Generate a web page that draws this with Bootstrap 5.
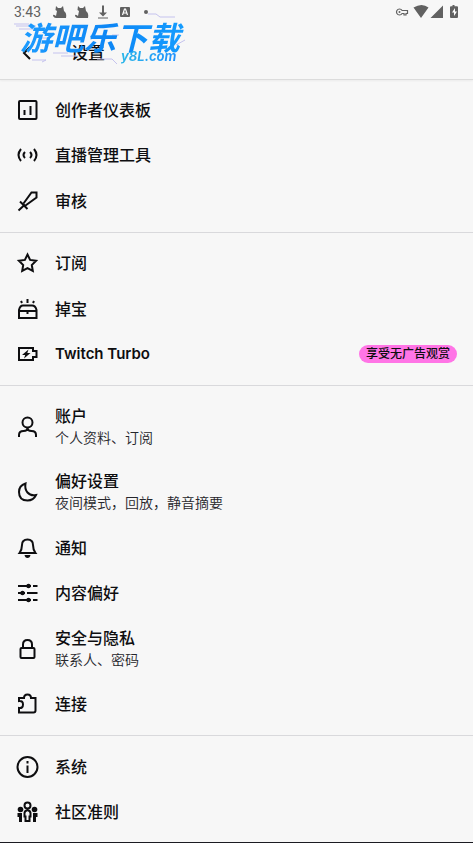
<!DOCTYPE html>
<html lang="zh-CN">
<head>
<meta charset="utf-8">
<meta name="viewport" content="width=device-width, initial-scale=1">
<title>设置</title>
<link href="https://cdn.jsdelivr.net/npm/bootstrap@5.3.0/dist/css/bootstrap.min.css" rel="stylesheet">
<style>
body { background: #f7f7f7; color: #0e0e10; font-family: Inter, "Noto Sans CJK SC", sans-serif; }
.status { height: 24px; padding: 0 14px; color: #616161; }
.clock { font: 400 14px/24px Roboto, sans-serif; width: 39px; }
.top { border-bottom: 1px solid #dcdcdc; box-shadow: 0 1px 2px #0000000d; }
.title-bar { height: 55px; padding: 2px 0 0 16px; gap: 33px; }
.title-bar h1 { font-size: 17px; line-height: 24px; font-weight: 500; }
.back { width: 22px; height: 24px; color: #0e0e10; }
.watermark { left: 14px; top: 12px; width: 172px; height: 60px; pointer-events: none; }
.wm-name, .wm-site { color: transparent; background-clip: text; -webkit-background-clip: text; white-space: nowrap; }
.wm-name { left: 4px; top: 3px; padding: 0 6px 0 2px; font: italic 700 32px/42px "Noto Sans CJK SC", sans-serif; background-image: linear-gradient(90deg, #1d9cff, #0d86f5 55%, #159dff); }
.wm-site { left: 107px; top: 34px; padding-right: 3px; font: italic 700 13px/20px Inter, sans-serif; background-image: linear-gradient(90deg, #2cb6e8, #1e90ff); }
.settings { padding: 7px 0; border-bottom: 1px solid #1b1b22; }
.item { flex: 1 0 45px; padding: 0 16px; gap: 16px; color: #0e0e10; text-decoration: none; font-size: 16px; line-height: 22px; font-weight: 500; }
.item-tall { flex-basis: 65px; }
.item small { display: block; font-size: 14px; line-height: 22px; font-weight: 350; color: #26262b; }
.item svg { width: 23px; height: 24px; flex: none; }
.latin { font-size: 15px; font-weight: 600; }
.rule { margin: 8px 0; border: 0; height: 1px; background: #d9d9dc; opacity: 1; flex: none; }
.promo { background: #ff75e6; color: #0e0e10; font-size: 12px; line-height: 18px; font-weight: 500; padding: 0 7px; }
.ln { fill: none; stroke: currentColor; stroke-width: 2; }
</style>
</head>
<body class="min-vh-100 d-flex flex-column">
<header class="top position-relative flex-shrink-0">
  <div class="status d-flex align-items-center">
    <span class="clock">3:43</span>
    <svg width="98" height="24" viewBox="0 0 98 24" fill="currentColor" aria-hidden="true">
      <path d="M3 6l2 2h3l2-2 1 5q3 2 2 7H3q-2 0-3-2 0-2 1.500-1L3 16l1-5-1.500-1z"/>
      <path d="M25 6l2 2h3l2-2 1 5q3 2 2 7H25q-2 0-3-2 0-2 1.500-1L25 16l1-5-1.500-1z"/>
      <path d="M49 5.500h2v7h3l-4 4-4-4h3zM45 17.500h10v1H45z"/>
      <rect x="67" y="7" width="10" height="10" rx="1"/>
      <path d="M69.500 15l2-6h1l2 6M70.500 13h3" fill="none" stroke="#fff" stroke-width="1.200"/>
      <circle cx="93" cy="12" r="2"/>
    </svg>
    <svg class="ms-auto" width="64" height="24" viewBox="0 0 64 24" fill="currentColor" aria-hidden="true">
      <path d="M4.500 9a3 3 0 1 0 2.600 4.500H9V15h2v-1.500h1.500v-3H7.100A3 3 0 0 0 4.500 9z" fill="none" stroke="currentColor" stroke-width="1.200"/>
      <circle cx="4.500" cy="12" r="1"/>
      <path d="M18.500 7.500q8.500-5 15 0L26 18zM48 5.500V18H35.500zM57.500 5h2v1.200h2.500q1 0 1 1V17q0 1-1 1h-6q-1 0-1-1V7.200q0-1 1-1h1.500z"/>
      <path d="M60 8l-3 4.500h2V16l3-4.500h-2z" fill="#fff"/>
    </svg>
  </div>
  <div class="title-bar d-flex align-items-center">
    <button class="back btn p-0 border-0 d-flex align-items-center" type="button" aria-label="返回"><svg width="22" height="24" viewBox="0 0 22 24"><path class="ln" d="M14 6l-6 6 6 6"/></svg></button>
    <h1 class="m-0">设置</h1>
  </div>
  <div class="watermark position-absolute">
    <svg class="position-absolute top-0 start-0" width="172" height="60" viewBox="0 0 172 60" fill="none" stroke="#c5c3ee" aria-hidden="true"><path d="M0 12h15M2 14h20M5 17h14M134 2h8l4 3h15M39 41h15M47 44h18M18 48h14l-4 2M83 47h15l5 5M162 33l9-5M98 23h7M28 26h5"/></svg>
    <span class="wm-name position-absolute">游吧乐下载</span>
    <span class="wm-site position-absolute">y8L.com</span>
  </div>
</header>

<main class="settings d-flex flex-column flex-grow-1">
  <a class="item d-flex align-items-center" href="#"><svg viewBox="0 0 23 24"><rect class="ln" x="3" y="3" width="17.500" height="18" rx="1"/><path class="ln" d="M8.500 12v5M14.500 8v9"/></svg><span>创作者仪表板</span></a>
  <a class="item d-flex align-items-center" href="#"><svg viewBox="0 0 23 24"><path class="ln" d="M5 6q-5 6 0 12M18 6q5 6 0 12M9 9q-3 3 0 6M14 9q3 3 0 6"/></svg><span>直播管理工具</span></a>
  <a class="item d-flex align-items-center" href="#"><svg viewBox="0 0 23 24"><path class="ln" d="M7.500 14.500l8-11H20.500V8.500l-11 8M4 12.500l7.500 7.500M9 15.500L2.500 21.500"/></svg><span>审核</span></a>
  <hr class="rule">
  <a class="item d-flex align-items-center" href="#"><svg viewBox="0 0 23 24"><path class="ln" d="M11.500 3.500l2.600 5.400 6 .9-4.300 4.200 1 6-5.300-2.900L6.200 20l1-6L2.900 9.800l6-.9z"/></svg><span>订阅</span></a>
  <a class="item d-flex align-items-center" href="#"><svg viewBox="0 0 23 24"><path class="ln" d="M3 21v-8q1-4.500 4-4.500h9q3.500 0 4.500 4.500v8zM3 14h17.500M11.500 14v3M11.500 2v4M5 4l1 2M18 4l-1 2"/></svg><span>掉宝</span></a>
  <a class="item d-flex align-items-center" href="#"><svg viewBox="0 0 23 24"><path class="ln" d="M3 6h14v3h3.500v6H17v3H3z"/><path d="M12.500 7.500L6 13h3.200L8 16.500l6.500-5.500h-3.200z" fill="currentColor"/></svg><span class="latin">Twitch Turbo</span><span class="promo rounded-pill ms-auto">享受无广告观赏</span></a>
  <hr class="rule">
  <a class="item item-tall d-flex align-items-center" href="#"><svg viewBox="0 0 23 24"><circle class="ln" cx="11.500" cy="7.500" r="5"/><path class="ln" d="M3 22v-2q0-4 4.500-4 4 0 4-3.500 0 3.500 4 3.500 4.500 0 4.500 4v2"/></svg><span>账户<small>个人资料、订阅</small></span></a>
  <a class="item item-tall d-flex align-items-center" href="#"><svg viewBox="0 0 23 24"><path class="ln" d="M9.500 3.500Q3 5.500 3 12q0 8.500 8.500 8.500 6 0 8.500-5.500-5.500 1-8.500-2.500-3-3.500-2-9z"/></svg><span>偏好设置<small>夜间模式，回放，静音摘要</small></span></a>
  <a class="item d-flex align-items-center" href="#"><svg viewBox="0 0 23 24"><path class="ln" d="M3.500 17Q6 13.500 6 9q0-5.500 5.500-5.500T17 9q0 4.500 2.500 8z"/><path d="M8.500 19h6q-.5 3-3 3t-3-3z" fill="currentColor"/></svg><span>通知</span></a>
  <a class="item d-flex align-items-center" href="#"><svg viewBox="0 0 23 24"><path class="ln" d="M2 5h13M17 5h4.500M2 12h7M11 12h10.500M2 19h13M17 19h4.500"/><g fill="currentColor"><circle cx="12.500" cy="5" r="2.200"/><circle cx="6.500" cy="12" r="2.200"/><circle cx="12.500" cy="19" r="2.200"/></g></svg><span>内容偏好</span></a>
  <a class="item item-tall d-flex align-items-center" href="#"><svg viewBox="0 0 23 24"><rect class="ln" x="4.500" y="11" width="14" height="10" rx="1"/><path class="ln" d="M7 11V7.500q0-4.500 4.500-4.500T16 7.500V11"/></svg><span>安全与隐私<small>联系人、密码</small></span></a>
  <a class="item d-flex align-items-center" href="#"><svg viewBox="0 0 23 24"><path class="ln" d="M3 9V6h5q0-3.500 3.500-3.500T15 6h4.500v12.500q0 2-2 2H3V16q4 .5 4-3.500T3 9z"/></svg><span>连接</span></a>
  <hr class="rule">
  <a class="item d-flex align-items-center" href="#"><svg viewBox="0 0 23 24"><circle class="ln" cx="11.500" cy="12" r="10"/><path class="ln" d="M11.500 10.500V18M11.500 6v2.500"/></svg><span>系统</span></a>
  <a class="item d-flex align-items-center" href="#"><svg viewBox="0 0 23 24"><g fill="currentColor"><circle cx="4.500" cy="9.500" r="2.800"/><circle cx="18.500" cy="9.500" r="2.800"/><path d="M1.500 13H6v9H3v-5H1.500zM21.500 13H17v9h3v-5h1.500z"/></g><circle class="ln" cx="11.500" cy="5.500" r="3"/><path class="ln" d="M9.500 21v-4.500h-1V13q0-2 3-3 3 1 3 3v3.500h-1V21z"/></svg><span>社区准则</span></a>
</main>
<script src="https://cdn.jsdelivr.net/npm/bootstrap@5.3.0/dist/js/bootstrap.bundle.min.js"></script>
</body>
</html>
